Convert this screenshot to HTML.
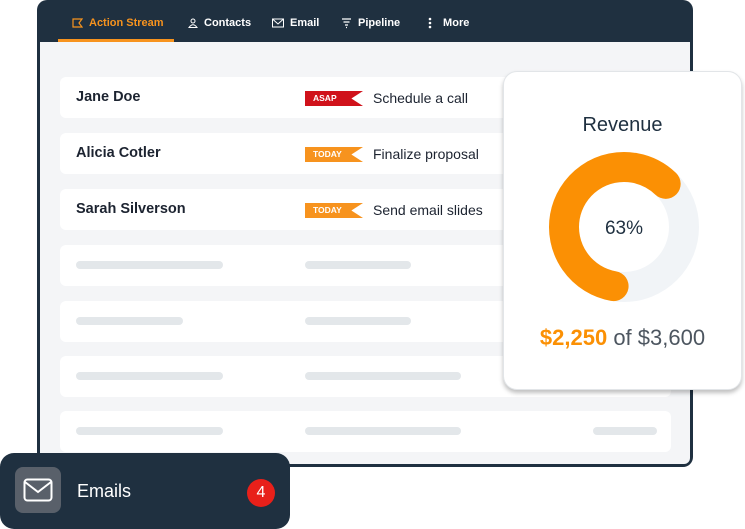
<!DOCTYPE html>
<html><head><meta charset="utf-8"><style>
*{margin:0;padding:0;box-sizing:border-box}
body{width:745px;height:529px;background:#fff;position:relative;overflow:hidden;font-family:"Liberation Sans",sans-serif}
.frame{position:absolute;left:37px;top:0;width:656px;height:467px;background:#1f3040;border-radius:10px}
.inner{position:absolute;left:40px;top:42px;width:650px;height:422px;background:#f4f5f7;border-radius:0 0 6px 6px}
.nav{position:absolute;top:17px;font-size:11px;font-weight:bold;color:#fff;display:flex;align-items:center;gap:6px}
.row{position:absolute;left:60px;width:611px;height:41px;background:#fff;border-radius:6px}
.name{position:absolute;left:16px;top:12px;font-size:14.5px;font-weight:bold;color:#1c2330}
.badge{position:absolute;left:245px;top:14px;width:58px;height:15px;font-size:8.5px;font-weight:bold;color:#fff;padding-left:8px;line-height:15px;clip-path:polygon(0 0,100% 0,80% 50%,100% 100%,0 100%)}
.task{position:absolute;left:313px;top:13px;font-size:14px;color:#1c2330}
.bar{position:absolute;top:16px;height:8px;background:#e3e7ea;border-radius:4px}
.card{position:absolute;left:503px;top:71px;width:239px;height:319px;background:#fff;border-radius:14px;border:1px solid #e2e5e8;box-shadow:0 3px 4px rgba(0,0,0,.25)}
.emails{position:absolute;left:0;top:453px;width:290px;height:76px;background:#1f3040;border-radius:14px}
</style></head><body>
<div class="frame"></div>
<div class="inner"></div>
<div class="nav" style="left:72px;color:#f7931e"><svg width="11" height="10"><path d="M1 1H10L7 5 10 9H1Z" fill="none" stroke="#f7931e" stroke-width="1.2"/></svg>Action Stream</div>
<div style="position:absolute;left:58px;top:39px;width:116px;height:3px;background:#f7931e"></div>
<div class="nav" style="left:188px"><svg width="10" height="10"><circle cx="5" cy="3" r="2" fill="none" stroke="#fff"/><path d="M1 9.5Q5 4 9 9.5Z" fill="none" stroke="#fff"/></svg>Contacts</div>
<div class="nav" style="left:272px"><svg width="12" height="10"><rect x=".5" y="1" width="11" height="8" fill="none" stroke="#fff"/><path d="M.5 1L6 6 11.5 1" fill="none" stroke="#fff"/></svg>Email</div>
<div class="nav" style="left:341px"><svg width="11" height="12"><path d="M1 2H10M2.5 5H8.5M4 8H7M5 10.5H6" stroke="#fff" stroke-width="1.2"/></svg>Pipeline</div>
<div class="nav" style="left:426px"><svg width="8" height="12"><circle cx="4" cy="2" r="1.3" fill="#fff"/><circle cx="4" cy="6" r="1.3" fill="#fff"/><circle cx="4" cy="10" r="1.3" fill="#fff"/></svg>&nbsp;More</div>

<div class="row" style="top:77px"><div class="name">Jane Doe</div><div class="badge" style="background:#d0121b">ASAP</div><div class="task">Schedule a call</div></div>
<div class="row" style="top:133px"><div class="name">Alicia Cotler</div><div class="badge" style="background:#f7931e">TODAY</div><div class="task">Finalize proposal</div></div>
<div class="row" style="top:189px"><div class="name">Sarah Silverson</div><div class="badge" style="background:#f7931e">TODAY</div><div class="task">Send email slides</div></div>
<div class="row" style="top:245px"><div class="bar" style="left:16px;width:147px"></div><div class="bar" style="left:245px;width:106px"></div></div>
<div class="row" style="top:301px"><div class="bar" style="left:16px;width:107px"></div><div class="bar" style="left:245px;width:106px"></div></div>
<div class="row" style="top:356px"><div class="bar" style="left:16px;width:147px"></div><div class="bar" style="left:245px;width:156px"></div></div>
<div class="row" style="top:411px"><div class="bar" style="left:16px;width:147px"></div><div class="bar" style="left:245px;width:156px"></div><div class="bar" style="left:533px;width:64px"></div></div>

<div class="card">
<div style="position:absolute;top:42px;width:100%;text-align:center;font-size:20px;color:#1f3040">Revenue</div>
<svg style="position:absolute;left:44px;top:79px" width="152" height="152">
<circle cx="76" cy="76" r="60" fill="none" stroke="#f1f4f7" stroke-width="30"/>
<circle cx="76" cy="76" r="60" fill="none" stroke="#fb9004" stroke-width="30" stroke-linecap="round" stroke-dasharray="224 400" transform="rotate(100 76 76)"/>
<text x="76" y="83" text-anchor="middle" font-size="19" fill="#1f3040" font-family="Liberation Sans">63%</text>
</svg>
<div style="position:absolute;top:253px;width:100%;text-align:center;font-size:22px;color:#4d5660"><b style="color:#fb9004">$2,250</b> of $3,600</div>
</div>

<div class="emails">
<div style="position:absolute;left:15px;top:14px;width:46px;height:46px;background:#59606a;border-radius:8px"><svg style="position:absolute;left:8px;top:11px" width="30" height="24"><rect x="1.5" y="1.5" width="27" height="21" rx="3" fill="none" stroke="#fff" stroke-width="2"/><path d="M2 4L15 14 28 4" fill="none" stroke="#fff" stroke-width="2"/></svg></div>
<div style="position:absolute;left:77px;top:28px;font-size:18px;color:#fff">Emails</div>
<div style="position:absolute;left:247px;top:26px;width:28px;height:28px;border-radius:50%;background:#e8201a;color:#fff;text-align:center;line-height:28px;font-size:16px">4</div>
</div>
</body></html>
